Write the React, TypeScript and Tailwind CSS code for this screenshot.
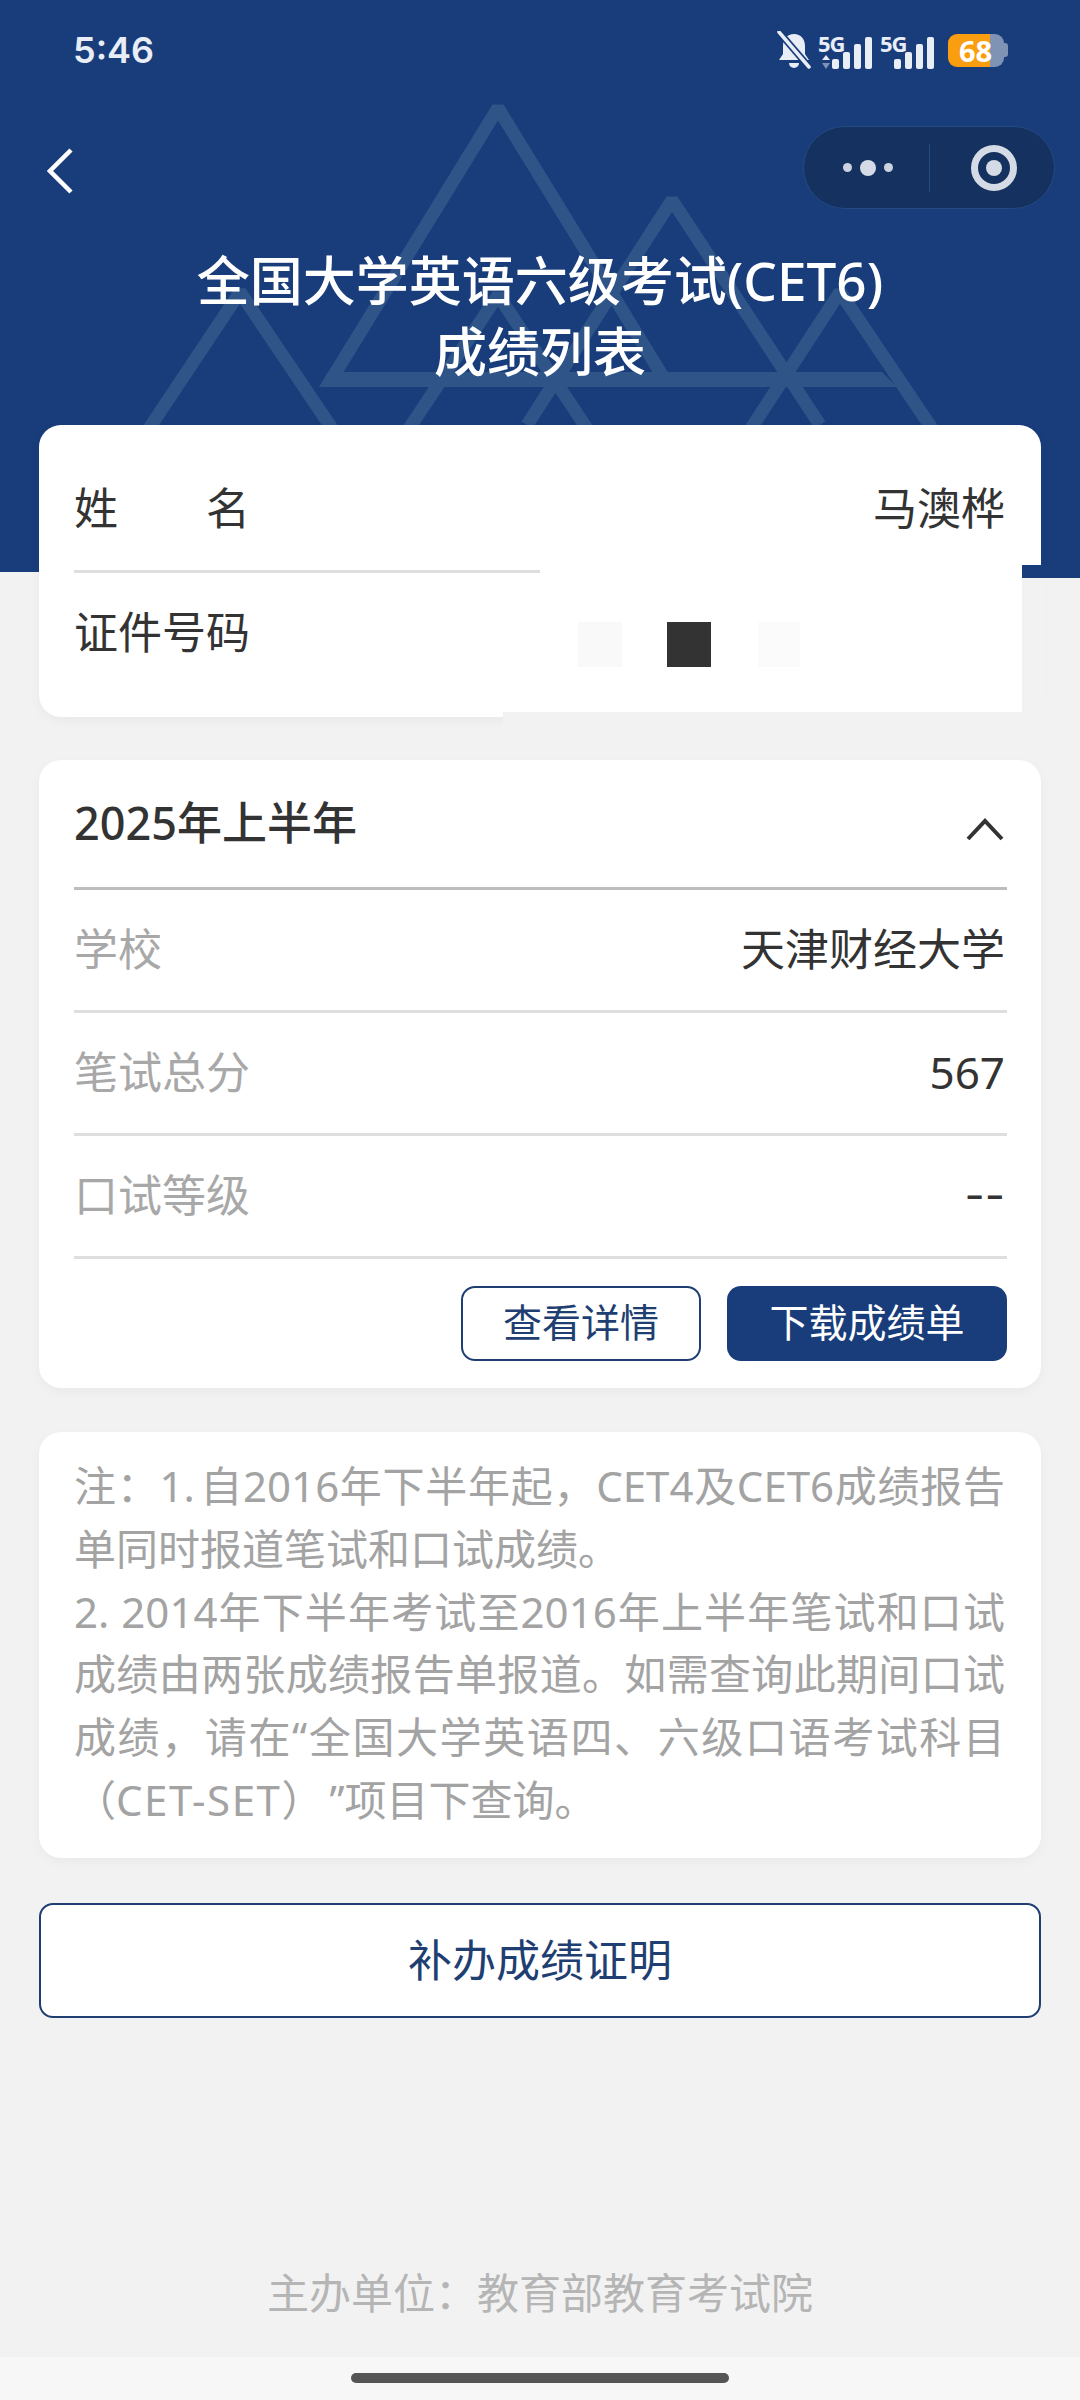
const Bars = () => (
  <>
    <div className="h-[10px] w-[7px] rounded-[2px] bg-[#e8edf6]" />
    <div className="h-[17px] w-[7px] rounded-[2px] bg-[#e8edf6]" />
    <div className="h-[25px] w-[7px] rounded-[2px] bg-[#e8edf6]" />
    <div className="h-[32px] w-[7px] rounded-[2px] bg-[#e8edf6]" />
  </>
);

const Signal = ({ arrows }: { arrows?: boolean }) => (
  <div className="relative flex h-[37px] w-[54px] items-end justify-end gap-1">
    <span className="absolute left-0 top-0 text-[22px] font-bold leading-none tracking-[-1px] text-[#e8edf6]">
      5G
    </span>
    {arrows && (
      <svg className="absolute bottom-0 left-[4px]" width="8" height="14" viewBox="0 0 8 14">
        <path d="M4 0 L8 5 H0 Z" fill="#e8edf6" />
        <path d="M4 14 L8 8 H0 Z" fill="#7f93b5" />
      </svg>
    )}
    <Bars />
  </div>
);

const StatusBar = () => (
  <div className="flex h-[100px] items-center justify-between pl-[73px] pr-[72px]">
    <span className="font-['Inter',sans-serif] text-[36px] font-semibold leading-none text-[#e8edf6]">
      5:46
    </span>
    <div className="flex items-center">
      <svg width="34" height="38" viewBox="0 0 34 38">
        <path d="M17 3C10 3 6 8 6 15V23L2 29H32L28 23V15C28 8 24 3 17 3Z" fill="#e8edf6" />
        <path d="M12 32a5 5 0 0 0 10 0Z" fill="#e8edf6" />
        <path d="M2 1L32 36" stroke="#183d7a" strokeWidth="7" />
        <path d="M2 1L32 36" stroke="#e8edf6" strokeWidth="3.500" strokeLinecap="round" />
      </svg>
      <div className="ml-[7px] flex items-center gap-[8px]">
        <Signal arrows />
        <Signal />
      </div>
      <div className="relative ml-[14px] flex items-center">
        <div className="flex h-[33px] w-[56px] overflow-hidden rounded-[9px]">
          <div className="w-[42px] bg-[#fa9d0f]" />
          <div className="flex-1 bg-[#7f93b5]" />
        </div>
        <div className="h-[14px] w-[4px] rounded-r-[3px] bg-[#7f93b5]" />
        <span className="absolute left-[11px] top-0 text-[29px] font-bold leading-[33px] text-white">68</span>
      </div>
    </div>
  </div>
);

const Capsule = () => (
  <div className="flex h-[83px] w-[252px] items-center rounded-full border border-[#244a82] bg-[#14315f]">
    <div className="flex w-[125px] items-center justify-center gap-[8px] pl-[3px]">
      <div className="size-[9px] rounded-full bg-[#ccd3e0]" />
      <div className="size-[16px] rounded-full bg-[#d5dbe6]" />
      <div className="size-[9px] rounded-full bg-[#ccd3e0]" />
    </div>
    <div className="h-[48px] w-px bg-[#244a82]" />
    <div className="flex flex-1 items-center justify-center pl-[4px]">
      <div className="flex size-[46px] items-center justify-center rounded-full border-[7px] border-[#d5dbe6]">
        <div className="size-[16px] rounded-full bg-[#d5dbe6]" />
      </div>
    </div>
  </div>
);

const Mountains = () => (
  <svg className="absolute left-0 top-0" width="1080" height="572" viewBox="0 0 1080 572" fill="none">
    <g stroke="#2f5588" strokeWidth="13" strokeLinejoin="bevel">
      <path d="M331 380L498 108L665 380" />
      <path d="M527 425L672 200L820 425" />
      <path d="M148 430L240 292L333 430" />
      <path d="M408 430L498 295L588 430" />
      <path d="M750 430L840 292L933 430" />
    </g>
    <path d="M319 387L328 372H882L897 387Z" fill="#2f5588" />
  </svg>
);

const Row = ({
  label,
  value,
  valueClass,
}: {
  label: string;
  value: string;
  valueClass?: string;
}) => (
  <div className="flex h-[123px] items-center justify-between border-b-[3px] border-[#dedede] pb-[3px]">
    <span className="text-[#a8a8a8]">{label}</span>
    <span className={`pr-[2px] text-[#333333] ${valueClass ?? ""}`}>{value}</span>
  </div>
);

export default function App() {
  return (
    <div className="relative flex h-[2400px] w-[1080px] flex-col overflow-hidden bg-[#f2f2f2] font-['Noto_Sans','Noto_Sans_CJK_SC',sans-serif] text-[44px] leading-none">
      <header className="relative h-[572px] shrink-0 bg-[#183d7a]">
        <Mountains />
        <div className="relative">
          <StatusBar />
          <div className="mt-[26px] flex h-[83px] items-center justify-between pl-[47px] pr-[25px]">
            <svg className="mt-[6px]" width="26" height="46" viewBox="0 0 26 46" fill="none">
              <path d="M24 2L3 23L24 44" stroke="#ffffff" strokeWidth="4.500" />
            </svg>
            <Capsule />
          </div>
          <h1 className="mt-[36px] text-center text-[53px] font-medium leading-[71px] text-white">
            全国大学英语六级考试(CET6)
            <br />
            成绩列表
          </h1>
        </div>
      </header>

      <main className="relative -mt-[147px] flex flex-1 flex-col px-[39px]">
        <section className="relative rounded-[22px] bg-white pb-[22px] pl-[35px] pr-[36px] pt-[21px] shadow-[0_4px_12px_rgba(0,0,0,0.04)]">
          <div className="flex h-[127px] items-center justify-between border-b-[3px] border-[#dedede] text-[#333333]">
            <span>姓　　名</span>
            <span>马澳桦</span>
          </div>
          <div className="flex h-[122px] items-center pb-[5px] text-[#333333]">
            <span>证件号码</span>
          </div>
        </section>

        <section className="mt-[43px] rounded-[22px] bg-white pb-[27px] pl-[35px] pr-[34px] shadow-[0_4px_12px_rgba(0,0,0,0.04)]">
          <div className="flex h-[130px] items-center justify-between border-b-[3px] border-[#bdbdbd] pb-[2px] text-[#333333]">
            <span className="text-[45px] font-medium">2025年上半年</span>
            <svg className="mr-[3px] mt-[14px]" width="38" height="23" viewBox="0 0 38 23" fill="none">
              <path d="M2 21L19 3L36 21" stroke="#333333" strokeWidth="4" />
            </svg>
          </div>
          <Row label="学校" value="天津财经大学" />
          <Row label="笔试总分" value="567" />
          <Row label="口试等级" value="--" valueClass="font-['Inter',sans-serif]" />
          <div className="mt-[27px] flex justify-end gap-[26px] text-[39px]">
            <button className="flex h-[75px] w-[240px] items-center justify-center rounded-[14px] border-2 border-[#1f3f72] bg-white pb-[4px] text-[#1f3f72]">
              查看详情
            </button>
            <button className="flex h-[75px] w-[280px] items-center justify-center rounded-[14px] bg-[#183d7a] pb-[4px] text-white">
              下载成绩单
            </button>
          </div>
        </section>

        <section className="mt-[44px] rounded-[22px] bg-white pb-[26px] pl-[35px] pr-[36px] pt-[23px] text-justify text-[42px] leading-[62.800px] text-[#a3a3a3] shadow-[0_4px_12px_rgba(0,0,0,0.04)]">
          <p className="[word-spacing:-6px]">注：1. 自2016年下半年起，CET4及CET6成绩报告单同时报道笔试和口试成绩。</p>
          <p>
            2. 2014年下半年考试至2016年上半年笔试和口试成绩由两张成绩报告单报道。如需查询此期间口试成绩，请在“全国大学英语四、六级口语考试科目（
            <span className="tracking-[1.500px]">CET-SET</span>）<span className="ml-[27px]">”</span>项目下查询。
          </p>
        </section>

        <button className="mt-[45px] flex h-[115px] items-center justify-center rounded-[14px] border-2 border-[#1f3f72] bg-white text-[#1f3f72]">
          补办成绩证明
        </button>

        <p className="mt-auto pb-[43px] text-center text-[42px] text-[#b5b5b5]">主办单位：教育部教育考试院</p>
      </main>

      <div className="flex h-[43px] shrink-0 justify-center bg-[#f7f7f7] pt-[16px]">
        <div className="h-[10px] w-[378px] rounded-full bg-[#555555]" />
      </div>

      {/* redaction patch painted over the id number in the original photo */}
      <div className="absolute left-[1022px] top-[565px] h-[13px] w-[58px] bg-[#183d7a]" />
      <div className="absolute left-[1022px] top-[578px] h-[150px] w-[24px] bg-[#f2f2f2]" />
      <div className="absolute left-[503px] top-[712px] h-[16px] w-[519px] bg-[#f2f2f2]" />
      <div className="absolute left-[540px] top-[565px] h-[147px] w-[482px] bg-white" />
      <div className="absolute left-[503px] top-[640px] h-[72px] w-[37px] bg-white" />
      <div className="absolute left-[578px] top-[622px] h-[45px] w-[44px] bg-[#f9f9f9]" />
      <div className="absolute left-[667px] top-[622px] h-[45px] w-[44px] bg-[#333333]" />
      <div className="absolute left-[758px] top-[622px] h-[45px] w-[42px] bg-[#fbfbfb]" />
    </div>
  );
}
